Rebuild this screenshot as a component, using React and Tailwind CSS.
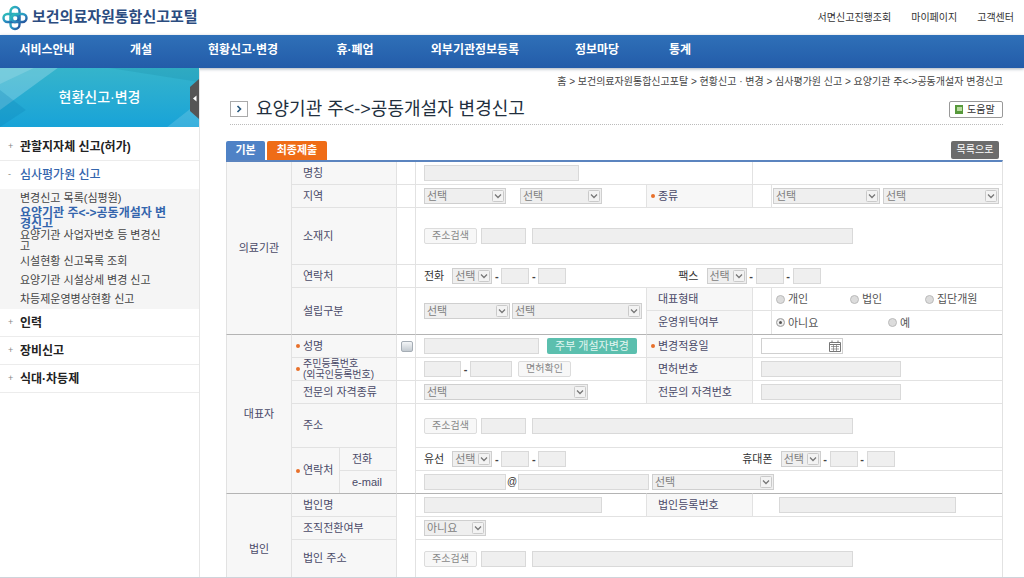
import React from "react";
import clsx from "clsx";

const topLinks = ["서면신고진행조회", "마이페이지", "고객센터"];

const navItems = [
  { name: "서비스안내", width: "w-[94px]" },
  { name: "개설", width: "w-[94px]" },
  { name: "현황신고·변경", width: "w-[110px]" },
  { name: "휴·폐업", width: "w-[114px]" },
  { name: "외부기관정보등록", width: "w-[126px]" },
  { name: "정보마당", width: "w-[118px]" },
  { name: "통계", width: "w-12" },
];

const subMenu = [
  { name: "변경신고 목록(심평원)" },
  { name: "요양기관 주<->공동개설자 변경신고", active: true },
  { name: "요양기관 사업자번호 등 변경신고" },
  { name: "시설현황 신고목록 조회" },
  { name: "요양기관 시설상세 변경 신고" },
  { name: "차등제운영병상현황 신고" },
];

const cellBorder = "border-t border-l border-[#e2e2e2]";
const groupLine = "[&>tr:first-child>*]:border-t-[#b4b4b4]";

const Logo = () => (
  <svg width="26" height="26" viewBox="0 0 26 26" fill="none" strokeWidth="2.4">
    <defs>
      <linearGradient id="logoFill" x1="0" y1="0" x2="1" y2="1">
        <stop offset="0" stopColor="#2fc0b8" />
        <stop offset="0.5" stopColor="#2a93c4" />
        <stop offset="1" stopColor="#24509a" />
      </linearGradient>
    </defs>
    <rect x="8.5" y="2" width="9" height="15" rx="4.5" stroke="url(#logoFill)" />
    <rect x="8.5" y="10" width="9" height="14" rx="4.5" stroke="url(#logoFill)" />
    <rect x="1.5" y="9" width="15" height="8" rx="4" stroke="url(#logoFill)" />
    <rect x="10" y="9" width="14.5" height="8" rx="4" stroke="url(#logoFill)" />
  </svg>
);

const Header = () => (
  <header>
    <div className="flex h-[35px] items-center justify-between pl-[2px] pr-[10px]">
      <a href="#home" className="flex items-center gap-1 text-[15px] font-bold text-[#2b4c80]">
        <Logo />
        보건의료자원통합신고포털
      </a>
      <div className="flex gap-5 text-[10px] text-[#333]">
        {topLinks.map((link) => (
          <a key={link} href="#link">
            {link}
          </a>
        ))}
      </div>
    </div>
    <nav className="flex h-[33px] items-center bg-linear-to-b from-[#2f70b8] to-[#235ca9] pb-1 text-[12px] font-bold text-white shadow-[0_1px_3px_rgba(80,100,120,0.5)]">
      {navItems.map((item) => (
        <a key={item.name} href="#nav" className={clsx("shrink-0 whitespace-nowrap text-center", item.width)}>
          {item.name}
        </a>
      ))}
    </nav>
  </header>
);

const SideItem = ({ name, open, last }) => (
  <a
    href="#menu"
    className={clsx(
      "flex h-7 items-center border-b pl-2 text-[12px]",
      open ? "font-medium text-[#3465ad]" : "font-bold text-[#222]",
      last ? "border-transparent" : "border-[#ececec]"
    )}
  >
    <span className="w-[12px] text-[9px] font-normal text-[#888]">{open ? "-" : "+"}</span>
    {name}
  </a>
);

const Sidebar = () => (
  <aside className="w-[200px] shrink-0 border-r border-[#e6e6e6]">
    <div className="relative flex h-[59px] items-center justify-center overflow-hidden bg-linear-to-b from-[#35b4cb] to-[#17a3d8] text-[14px] font-medium text-white">
      <svg className="absolute inset-0 h-full w-full" viewBox="0 0 200 59" preserveAspectRatio="none">
        <polygon points="0,0 58,0 0,42" fill="#fff" opacity="0.22" />
        <polygon points="0,16 34,0 0,0" fill="#fff" opacity="0.15" />
        <polygon points="0,22 26,42 0,59" fill="#0d7fb5" opacity="0.25" />
        <polygon points="200,0 200,14 110,0" fill="#0c6f8a" opacity="0.15" />
        <polygon points="200,34 200,59 168,59" fill="#fff" opacity="0.15" />
      </svg>
      <span className="relative">현황신고·변경</span>
      <button type="button" aria-label="메뉴 접기" className="absolute right-0 top-[11px]">
        <svg width="9" height="40" viewBox="0 0 9 40">
          <path d="M9 0L0 8V32L9 40Z" fill="#555" />
          <path d="M6.5 16.5V22.5L3 19.5Z" fill="#fff" />
        </svg>
      </button>
    </div>
    <div className="pt-[6px]">
      <SideItem name="관할지자체 신고(허가)" />
      <SideItem name="심사평가원 신고" open last />
    </div>
    <ul className="bg-[#f5f5f5] pl-5 pr-[31px]">
      {subMenu.map((item) => (
        <li key={item.name} className="flex min-h-[19px] items-center">
          <a
            href="#sub"
            className={clsx(
              "leading-[11px]",
              item.active ? "text-[12px] font-bold text-[#3465ad]" : "text-[11px] text-[#444]"
            )}
          >
            {item.name}
          </a>
        </li>
      ))}
    </ul>
    <SideItem name="인력" />
    <SideItem name="장비신고" />
    <SideItem name="식대·차등제" />
  </aside>
);

const Field = ({ id, label, className }) => (
  <input
    id={id}
    type="text"
    aria-label={label}
    disabled
    className={clsx("h-4 min-w-0 border border-[#d9d9d9] bg-[#efefef] px-1 text-[11px]", className)}
  />
);

const Select = ({ id, label, className, value = "선택" }) => (
  <span className={clsx("relative inline-flex h-4 shrink-0", className)}>
    <select
      id={id}
      aria-label={label}
      disabled
      className="h-4 w-full appearance-none border border-[#cfcfcf] bg-[#efefef] pl-[2px] text-[11px] leading-[14px] text-[#808080] opacity-100"
    >
      <option>{value}</option>
    </select>
    <svg className="pointer-events-none absolute right-[2px] top-[2px]" width="12" height="12" viewBox="0 0 12 12">
      <rect x="0.5" y="0.5" width="11" height="11" rx="1" fill="#f3f3f3" stroke="#cacaca" />
      <path d="M3 4.5L6 7.5L9 4.5" fill="none" stroke="#777" strokeWidth="1.3" />
    </svg>
  </span>
);

const GrayButton = ({ children, className }) => (
  <button
    type="button"
    disabled
    className={clsx(
      "h-4 w-[53px] shrink-0 rounded-xs border border-[#dcdcdc] bg-[#f7f7f7] text-[10px] leading-[14px] text-[#888]",
      className
    )}
  >
    {children}
  </button>
);

const Label = ({ children, htmlFor, required, center, className, ...props }) => (
  <th {...props} className={clsx(cellBorder, "bg-[#f7f7f7] p-0 text-[11px] font-normal text-[#4a4a68]")}>
    <div
      className={clsx("flex items-center", center ? "justify-center" : "pl-[3px] text-left", className || "leading-[11px]")}
    >
      {!center && (
        <span className="flex w-2 shrink-0 items-center">
          {required && <i className="ml-px size-1 rounded-full bg-[#e8702a]" />}
        </span>
      )}
      <label htmlFor={htmlFor}>{children}</label>
    </div>
  </th>
);

const Cell = ({ children, className = "pl-2", ...props }) => (
  <td {...props} className={clsx(cellBorder, "p-0")}>
    <div className={clsx("flex items-center text-[11px]", className)}>{children}</div>
  </td>
);

const Dash = () => <span className="w-[9px] shrink-0 text-center font-bold leading-4 text-[#444]">-</span>;

const Phone = ({ id, name, className }) => (
  <div className={clsx("flex items-center", className)}>
    <label htmlFor={id} className="mr-2 whitespace-nowrap leading-4 text-[#333]">
      {name}
    </label>
    <Select id={id} className="w-10" />
    <Dash />
    <Field label={`${name} 가운데 번호`} className="w-7" />
    <Dash />
    <Field label={`${name} 끝 번호`} className="w-7" />
  </div>
);

const Address = ({ id }) => (
  <>
    <GrayButton>주소검색</GrayButton>
    <Field label="우편번호" className="ml-1 w-[45px]" />
    <Field id={id} className="ml-[6px] w-[321px]" />
  </>
);

const Radio = ({ name, label, checked, className }) => (
  <label className={clsx("flex items-center gap-[3px] whitespace-nowrap leading-4 text-[#555]", className)}>
    <input
      type="radio"
      name={name}
      defaultChecked={checked}
      disabled
      className="size-[9px] appearance-none rounded-full border border-[#bbb] bg-[#dcdcdc] checked:bg-[#555] checked:shadow-[inset_0_0_0_2px_#eee]"
    />
    {label}
  </label>
);

const CalendarIcon = () => (
  <svg width="12" height="12" viewBox="0 0 12 12" fill="none" stroke="#777">
    <path d="M0.5 2.5H11.5V11.5H0.5ZM0.5 4.5H11.5M3 0.5V3M9 0.5V3" />
    <path d="M2 6.5H10M2 9H10M4.5 5V11M7.5 5V11" strokeWidth="0.7" />
  </svg>
);

const FormTable = () => (
  <table className="w-full table-fixed border-separate border-spacing-0 border-t-2 border-r border-t-[#5b84bf] border-r-[#e2e2e2]">
    <colgroup>
      <col className="w-[65px]" />
      <col className="w-12" />
      <col className="w-[57px]" />
      <col className="w-[19px]" />
      <col />
      <col className="w-[106px]" />
      <col className="w-[19px]" />
      <col />
    </colgroup>

    {/* 의료기관 */}
    <tbody className="[&>tr:first-child>*]:border-t-0">
      <tr className="h-[22px]">
        <Label rowSpan={6} center>의료기관</Label>
        <Label colSpan={2} htmlFor="orgName">명칭</Label>
        <Cell />
        <Cell colSpan={2}>
          <Field id="orgName" className="w-[155px]" />
        </Cell>
        <Cell colSpan={2} />
      </tr>
      <tr className="h-[23px]">
        <Label colSpan={2} htmlFor="region">지역</Label>
        <Cell />
        <Cell>
          <Select id="region" className="w-[82px]" />
          <Select label="시군구" className="ml-[14px] w-[82px]" />
        </Cell>
        <Label htmlFor="kind" required>종류</Label>
        <Cell />
        <Cell className="gap-[3px] pl-px">
          <Select id="kind" className="w-[107px]" />
          <Select label="세부 종류" className="w-[116px]" />
        </Cell>
      </tr>
      <tr className="h-[57px]">
        <Label colSpan={2} htmlFor="orgAddress">소재지</Label>
        <Cell />
        <Cell colSpan={4}>
          <Address id="orgAddress" />
        </Cell>
      </tr>
      <tr className="h-[23px]">
        <Label colSpan={2} htmlFor="orgTel">연락처</Label>
        <Cell />
        <Cell colSpan={4}>
          <Phone id="orgTel" name="전화" />
          <Phone id="orgFax" name="팩스" className="ml-28" />
        </Cell>
      </tr>
      <tr className="h-[23px]">
        <Label rowSpan={2} colSpan={2} htmlFor="founding">설립구분</Label>
        <Cell rowSpan={2} />
        <Cell rowSpan={2} className="gap-[2px] pl-2">
          <Select id="founding" className="w-[86px]" />
          <Select label="설립 세부구분" className="w-[130px]" />
        </Cell>
        <Label>대표형태</Label>
        <Cell />
        <Cell className="pl-1">
          <Radio name="ownerType" label="개인" className="w-[74px]" />
          <Radio name="ownerType" label="법인" className="w-[75px]" />
          <Radio name="ownerType" label="집단개원" />
        </Cell>
      </tr>
      <tr className="h-6">
        <Label>운영위탁여부</Label>
        <Cell />
        <Cell className="pl-1">
          <Radio name="entrusted" label="아니요" checked className="w-[112px]" />
          <Radio name="entrusted" label="예" />
        </Cell>
      </tr>
    </tbody>

    {/* 대표자 */}
    <tbody className={groupLine}>
      <tr className="h-[23px]">
        <Label rowSpan={6} center>대표자</Label>
        <Label colSpan={2} htmlFor="ownerName" required>성명</Label>
        <Cell className="pl-1">
          <input
            type="checkbox"
            aria-label="대표자 선택"
            className="h-[11px] w-3 appearance-none rounded-xs border border-[#a5adb5] bg-linear-to-b from-[#f4f6f8] to-[#c3cad0]"
          />
        </Cell>
        <Cell>
          <Field id="ownerName" className="w-[115px]" />
          <button type="button" className="ml-2 h-4 w-[90px] rounded-xs bg-[#5bbfae] text-[11px] leading-4 text-[#e2f6f1]">
            주부 개설자변경
          </button>
        </Cell>
        <Label htmlFor="applyDate" required>변경적용일</Label>
        <Cell colSpan={2}>
          <div className="flex h-4 w-[82px] items-center border border-[#d0d0d0] pr-px">
            <input id="applyDate" type="text" className="h-3 min-w-0 flex-1 px-1 text-[10px] outline-none" />
            <button type="button" aria-label="달력">
              <CalendarIcon />
            </button>
          </div>
        </Cell>
      </tr>
      <tr className="h-[23px]">
        <Label colSpan={2} htmlFor="residentNo" required className="text-[10px] leading-[11px]">
          주민등록번호
          <br />
          (외국인등록번호)
        </Label>
        <Cell />
        <Cell>
          <Field id="residentNo" className="w-[37px]" />
          <Dash />
          <Field label="주민등록번호 뒷자리" className="w-[42px]" />
          <GrayButton className="ml-[6px]">면허확인</GrayButton>
        </Cell>
        <Label htmlFor="licenseNo">면허번호</Label>
        <Cell colSpan={2}>
          <Field id="licenseNo" className="w-[140px]" />
        </Cell>
      </tr>
      <tr className="h-[23px]">
        <Label colSpan={2} htmlFor="specialty">전문의 자격종류</Label>
        <Cell />
        <Cell>
          <Select id="specialty" className="w-[164px]" />
        </Cell>
        <Label htmlFor="specialtyNo">전문의 자격번호</Label>
        <Cell colSpan={2}>
          <Field id="specialtyNo" className="w-[140px]" />
        </Cell>
      </tr>
      <tr className="h-11">
        <Label colSpan={2} htmlFor="ownerAddress">주소</Label>
        <Cell rowSpan={3} />
        <Cell colSpan={4}>
          <Address id="ownerAddress" />
        </Cell>
      </tr>
      <tr className="h-[23px]">
        <Label rowSpan={2} required>연락처</Label>
        <Label htmlFor="ownerTel">
          <span className="pl-px">전화</span>
        </Label>
        <Cell colSpan={4}>
          <Phone id="ownerTel" name="유선" />
          <Phone id="ownerMobile" name="휴대폰" className="ml-44" />
        </Cell>
      </tr>
      <tr className="h-[23px]">
        <Label htmlFor="email">
          <span className="pl-px">e-mail</span>
        </Label>
        <Cell colSpan={4}>
          <Field id="email" className="w-[82px]" />
          <span className="w-3 text-center text-[10px] leading-4 text-[#333]">@</span>
          <Field label="이메일 도메인" className="w-[131px]" />
          <Select label="도메인 선택" className="ml-[3px] w-[122px]" />
        </Cell>
      </tr>
    </tbody>

    {/* 법인 */}
    <tbody className={groupLine}>
      <tr className="h-[23px]">
        <Label rowSpan={3} center className="pt-7 leading-[11px]">법인</Label>
        <Label colSpan={2} htmlFor="corpName">법인명</Label>
        <Cell rowSpan={3} />
        <Cell>
          <Field id="corpName" className="w-[178px]" />
        </Cell>
        <Label htmlFor="corpNo">법인등록번호</Label>
        <Cell colSpan={2} className="pl-[26px]">
          <Field id="corpNo" className="w-[177px]" />
        </Cell>
      </tr>
      <tr className="h-[23px]">
        <Label colSpan={2} htmlFor="converted">조직전환여부</Label>
        <Cell colSpan={4}>
          <Select id="converted" value="아니요" className="w-[62px]" />
        </Cell>
      </tr>
      <tr className="h-[38px]">
        <Label colSpan={2} htmlFor="corpAddress">법인 주소</Label>
        <Cell colSpan={4}>
          <Address id="corpAddress" />
        </Cell>
      </tr>
    </tbody>
  </table>
);

const App = () => (
  <div className="bg-white font-['Liberation_Sans','Noto_Sans_CJK_KR',sans-serif]">
    <Header />
    <div className="flex border-b border-[#cfd3da]">
      <Sidebar />
      <main className="min-w-0 flex-1 pl-[26px] pr-[21px]">
        <p className="flex h-[26px] items-center justify-end text-[10px] text-[#444]">
          홈 &gt; 보건의료자원통합신고포탈 &gt; 현황신고 · 변경 &gt; 심사평가원 신고 &gt; 요양기관 주&lt;-&gt;공동개설자 변경신고
        </p>
        <div className="ml-1 flex h-[31px] items-center justify-between border-b border-dotted border-[#bbb]">
          <h1 className="flex items-center gap-2 text-[18px] text-[#222f3e]">
            <svg width="18" height="16" viewBox="0 0 18 16" fill="none">
              <rect x="0.5" y="0.5" width="17" height="15" stroke="#aaa" />
              <path d="M7.5 5L10.5 8L7.5 11" stroke="#26567c" strokeWidth="1.6" />
            </svg>
            요양기관 주&lt;-&gt;공동개설자 변경신고
          </h1>
          <button
            type="button"
            className="flex h-[17px] w-[54px] items-center gap-1 rounded-xs border border-[#999] pl-[5px] text-[10px] text-[#333]"
          >
            <svg width="8" height="9" viewBox="0 0 8 9">
              <rect width="8" height="9" fill="#57993b" />
              <rect x="2" y="2" width="5" height="4" fill="#b9dca0" />
            </svg>
            도움말
          </button>
        </div>
        <div className="mt-4 flex h-[19px] items-start justify-between pr-1">
          <div className="flex gap-[2px] text-[11px] font-bold text-white">
            <button type="button" className="h-[19px] w-[39px] rounded-t-xs bg-[#4f82c6]">
              기본
            </button>
            <button type="button" className="h-[19px] w-[60px] rounded-t-xs bg-[#ef6c16]">
              최종제출
            </button>
          </div>
          <button type="button" className="h-[18px] w-12 rounded-xs bg-[#6c6c6c] text-[10px] leading-[18px] text-white">
            목록으로
          </button>
        </div>
        <FormTable />
      </main>
    </div>
  </div>
);

export default App;
